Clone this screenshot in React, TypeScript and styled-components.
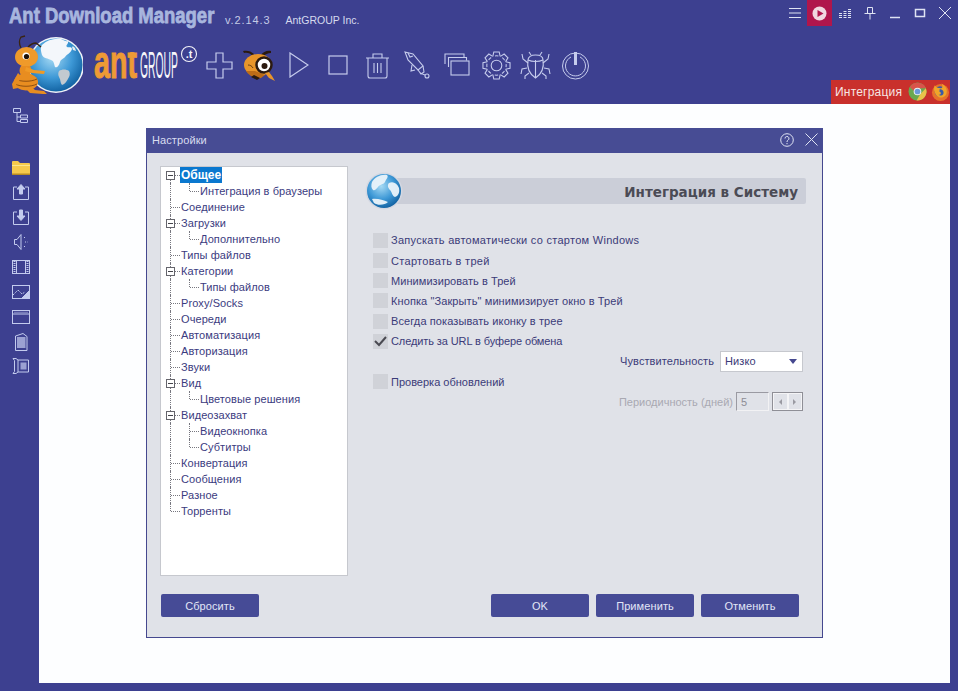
import React from "react";
import styled, { createGlobalStyle } from "styled-components";

const GlobalStyle = createGlobalStyle`
  html, body {
    margin: 0;
    padding: 0;
    background: #3d4090;
  }
  body {
    font-family: "Liberation Sans", Arial, sans-serif;
    font-size: 11px;
    overflow: hidden;
  }
`;

const Shell = styled.div`
  width: 958px;
  height: 691px;
  display: flex;
  flex-direction: column;
  background: #3d4090;
`;

const Header = styled.header`
  height: 104px;
  display: flex;
  flex-direction: column;
  flex-shrink: 0;
`;

const TitleRow = styled.div`
  height: 26px;
  display: flex;
  align-items: flex-start;
`;

const AppTitle = styled.div`
  width: 206px;
  margin: 3px 0 0 9px;
`;

const AppTitleText = styled.span`
  display: inline-block;
  transform: scaleX(0.84);
  transform-origin: left center;
  font-size: 22px;
  font-weight: 700;
  line-height: 26px;
  white-space: nowrap;
  color: #a8b6de;
  -webkit-text-stroke: 0.8px #a8b6de;
`;

const Version = styled.span`
  margin: 14px 0 0 10px;
  font-size: 11px;
  letter-spacing: 0.9px;
  line-height: 13px;
  color: #c5cbe6;
`;

const Company = styled.span`
  margin: 14px 0 0 15px;
  font-size: 10.5px;
  line-height: 13px;
  color: #d6daee;
`;

const WindowControls = styled.div`
  margin-left: auto;
  display: flex;
  align-items: center;
  height: 26px;
`;

const ControlButton = styled.button<{ $active?: boolean; $width?: number }>`
  width: ${(p) => p.$width ?? 25}px;
  height: 26px;
  padding: 0;
  border: 0;
  display: flex;
  align-items: center;
  justify-content: center;
  background: ${(p) => (p.$active ? "#b0164c" : "transparent")};
`;

const Toolbar = styled.div`
  flex: 1;
  display: flex;
  align-items: center;
  padding-left: 12px;
`;

const LogoMark = styled.div`
  width: 71px;
  height: 60px;
  flex-shrink: 0;
`;

const Brand = styled.div`
  width: 106px;
  height: 60px;
  margin-left: 11px;
  flex-shrink: 0;
`;

const ToolSlot = styled.button`
  width: 39.5px;
  height: 36px;
  padding: 0;
  border: 0;
  background: transparent;
  display: flex;
  align-items: center;
  justify-content: center;
  flex-shrink: 0;
`;

const IntegrationBadge = styled.div`
  margin-left: auto;
  margin-right: 8px;
  align-self: flex-end;
  width: 119px;
  height: 24px;
  box-sizing: border-box;
  padding-left: 4px;
  display: flex;
  align-items: center;
  background: #c9302c;
  color: #f6e6e4;
  font-size: 12px;
  letter-spacing: 0.2px;
`;

const BadgeIcons = styled.div`
  margin-left: auto;
  display: flex;
  gap: 4px;
`;

const Workspace = styled.div`
  flex: 1;
  display: flex;
  min-height: 0;
`;

const Sidebar = styled.nav`
  width: 39px;
  flex-shrink: 0;
  display: flex;
  flex-direction: column;
`;

const SideSlot = styled.div<{ $gap?: boolean }>`
  height: 24.9px;
  padding-left: 12px;
  margin-top: ${(p) => (p.$gap ? 26 : 0)}px;
  display: flex;
  align-items: center;
`;

const Content = styled.main`
  flex: 1;
  margin: 0 8px 8px 0;
  padding: 24px 0 0 107px;
  background: #fdfeff;
`;

const Dialog = styled.section`
  width: 677px;
  height: 510px;
  box-sizing: border-box;
  border: 1px solid #45488f;
  border-top: 0;
  background: #e0e2e8;
  display: flex;
  flex-direction: column;
`;

const DialogTitle = styled.div`
  height: 25px;
  flex-shrink: 0;
  display: flex;
  align-items: center;
  padding: 0 5px 2px 6px;
  box-sizing: border-box;
  margin: 0 -1px;
  background: #474c94;
  color: #d9ddf0;
  font-size: 11px;
  letter-spacing: 0.1px;
`;

const DialogActions = styled.div`
  margin-left: auto;
  display: flex;
  align-items: center;
  gap: 11px;
`;

const DialogBody = styled.div`
  flex: 1;
  display: flex;
  flex-direction: column;
  padding: 13px 16px 0 13px;
`;

const MainRow = styled.div`
  display: flex;
  height: 410px;
`;

const Tree = styled.div`
  width: 188px;
  box-sizing: border-box;
  border: 1px solid #c6c8ce;
  background: #fff;
  flex-shrink: 0;
`;

const TreeRow = styled.div`
  height: 16px;
  display: flex;
`;

const Guide = styled.span<{ $line: "full" | "half" | "down" | "none"; $branch?: boolean }>`
  position: relative;
  width: 19px;
  height: 16px;
  flex-shrink: 0;

  &::before {
    content: "";
    position: absolute;
    left: 9px;
    top: ${(p) => (p.$line === "down" ? 8 : 0)}px;
    bottom: ${(p) => (p.$line === "half" ? 8 : 0)}px;
    border-left: ${(p) => (p.$line === "none" ? "0" : "1px dotted #77777f")};
  }

  &::after {
    content: "";
    position: absolute;
    left: 10px;
    right: 0;
    top: 8px;
    border-top: ${(p) => (p.$branch ? "1px dotted #77777f" : "0")};
  }
`;

const ExpandBox = styled.i`
  position: absolute;
  z-index: 1;
  left: 5px;
  top: 4px;
  width: 7px;
  height: 7px;
  border: 1px solid #65656c;
  background: #fff;

  &::after {
    content: "";
    position: absolute;
    left: 1px;
    right: 1px;
    top: 3px;
    border-top: 1px solid #45454c;
  }
`;

const TreeLabel = styled.span<{ $selected?: boolean }>`
  height: 16px;
  padding: 0 1px;
  line-height: 16px;
  white-space: nowrap;
  letter-spacing: ${(p) => (p.$selected ? 0 : 0.08)}px;
  font-size: ${(p) => (p.$selected ? 12 : 11)}px;
  color: ${(p) => (p.$selected ? "#fff" : "#3b3b80")};
  background: ${(p) => (p.$selected ? "#0a78cf" : "transparent")};
  font-weight: ${(p) => (p.$selected ? 700 : 400)};
`;

const Panel = styled.div`
  flex: 1;
  margin-left: 17px;
  display: flex;
  flex-direction: column;
`;

const PanelHeader = styled.div`
  height: 38px;
  margin-top: 6px;
  display: flex;
  align-items: center;
`;

const PanelGlobe = styled.div`
  width: 38px;
  height: 38px;
  position: relative;
  z-index: 1;
  flex-shrink: 0;
`;

const PanelHeading = styled.h2`
  flex: 1;
  height: 26px;
  margin: 0 0 0 -17px;
  padding-right: 8px;
  border-radius: 2px;
  background: #cbced8;
  color: #4b4b55;
  text-align: right;
  font-family: "DejaVu Sans", sans-serif;
  font-size: 13.5px;
  font-weight: 700;
  line-height: 29px;
`;

const Form = styled.div`
  margin-top: 20.3px;
  padding: 0 3px 0 8px;
  display: flex;
  flex-direction: column;
`;

const CheckRow = styled.label<{ $tracking: number }>`
  height: 20.2px;
  display: flex;
  align-items: center;
  gap: 3px;
  letter-spacing: ${(p) => p.$tracking}px;
  color: #3b3b78;
`;

const CheckBox = styled.span`
  width: 15px;
  height: 15px;
  flex-shrink: 0;
  display: flex;
  align-items: center;
  justify-content: center;
  background: #d0d2d8;
`;

const OptionRow = styled.div<{ $disabled?: boolean }>`
  height: 20px;
  display: flex;
  align-items: center;
  justify-content: flex-end;
  letter-spacing: ${(p) => (p.$disabled ? 0 : 0.1)}px;
  color: ${(p) => (p.$disabled ? "#a9a9b2" : "#3b3b78")};
`;

const SelectBox = styled.div`
  width: 83px;
  height: 21px;
  box-sizing: border-box;
  margin-left: 6px;
  padding: 0 5px 0 4px;
  display: flex;
  align-items: center;
  justify-content: space-between;
  background: #fff;
  border: 1px solid #c6c8ce;
  color: #3b3b78;
`;

const SelectArrow = styled.span`
  width: 0;
  height: 0;
  border-left: 4.5px solid transparent;
  border-right: 4.5px solid transparent;
  border-top: 5px solid #45488f;
`;

const SpinInput = styled.div`
  width: 33px;
  height: 19px;
  box-sizing: border-box;
  margin-left: 3px;
  padding-left: 4px;
  display: flex;
  align-items: center;
  border: 1px solid #9a9aa2;
  border-right-color: #f2f2f4;
  border-bottom-color: #f2f2f4;
  color: #8c8c95;
`;

const SpinGroup = styled.div`
  margin-left: 3px;
  display: flex;
  border: 1px solid #8f8f96;
`;

const SpinButton = styled.span<{ $dir: "left" | "right" }>`
  width: 14.5px;
  height: 17px;
  box-sizing: border-box;
  display: flex;
  align-items: center;
  justify-content: center;
  border: 1px solid #f4f4f6;
  background: #e0e2e8;

  &::after {
    content: "";
    border-top: 3px solid transparent;
    border-bottom: 3px solid transparent;
    border-${(p) => (p.$dir === "left" ? "right" : "left")}: 3px solid #9a9aa2;
  }
`;

const Footer = styled.div`
  margin-top: 18px;
  padding: 0 7px 0 1px;
  display: flex;
`;

const FooterRight = styled.div`
  margin-left: auto;
  display: flex;
  gap: 7px;
`;

const ActionButton = styled.button`
  width: 98px;
  height: 23px;
  padding: 0;
  border: 0;
  border-radius: 2px;
  background: #464b96;
  color: #e2e6f6;
  font-family: "Liberation Sans", sans-serif;
  font-size: 11px;
  letter-spacing: 0.1px;
`;

const ICON = "#c6cced";

const GlobeDefs = ({ id }: { id: string }) => (
  <defs>
    <radialGradient id={id} cx="42%" cy="36%" r="70%">
      <stop offset="0%" stopColor="#a6daf4" />
      <stop offset="55%" stopColor="#3d98d6" />
      <stop offset="100%" stopColor="#0b5a9a" />
    </radialGradient>
  </defs>
);

const AntLogo = () => (
  <svg width="71" height="60" viewBox="0 0 71 60">
    <GlobeDefs id="logoGlobe" />
    <circle cx="44" cy="30" r="28" fill="#f0f3f8" />
    <circle cx="44" cy="30" r="26.500" fill="url(#logoGlobe)" />
    <path d="M30 10c5-5 12-7 19-6 3 1 5 3 7 2 1 3-3 4-1 6 2 1 4-1 5 2-1 4-5 5-7 8-2 2-4 2-5 5-1 4-3 6-5 5-1-3-1-6-4-7-3-2-7-1-9-5-1-4-2-7 0-10z" fill="#f4f7fb" />
    <path d="M47 36c3-2 7-2 10 0 1 2 1 4 0 6-2 4-4 7-7 8-2-2-1-5-3-8-1-2-1-4 0-6z" fill="#c2cad0" />
    <path d="M60 12c1-1 2 0 3 1l1 3-3-1z" fill="#e4eaf0" />
    <path d="M9 13C7 9 7 5 9 2l4-1M16 12c2-2 4-4 8-4l5 4" fill="none" stroke="#3a2412" strokeWidth="1.300" />
    <ellipse cx="14.500" cy="22" rx="11.500" ry="10" fill="#ef9a2a" />
    <circle cx="14" cy="21" r="3.600" fill="#fff" />
    <circle cx="14.500" cy="21.500" r="2.600" fill="#1c1008" />
    <path d="M9 31c-2 3-2 6 0 9l8 0c3-2 3-6 1-9z" fill="#e88d20" />
    <path d="M14 32l8 3 11 1-1 3-12-1-7-2z" fill="#f09a26" />
    <ellipse cx="14" cy="47" rx="12" ry="8.500" fill="#e88d20" />
    <path d="M3 44c6 3 16 3 22 0M3 49c6 3 16 3 22 0" stroke="#8f4f10" strokeWidth="1" fill="none" />
    <path d="M6 38L0 49l1 5 5-1-2-3 6-8zM14 54l4 4 13 1 4 0-3-3-9-1-3-3z" fill="#e88d20" />
  </svg>
);

const BrandLogo = () => (
  <svg width="106" height="60" viewBox="0 -10 106 60">
    <defs>
      <clipPath id="brandClip">
        <rect x="-1" y="7" width="46" height="30" />
      </clipPath>
    </defs>
    <g clipPath="url(#brandClip)">
      <text
        transform="translate(0 33) scale(0.61 1)"
        fill="#ee9a35"
        stroke="#ee9a35"
        strokeWidth="1"
        fontFamily="Liberation Sans"
        fontWeight="700"
        fontSize="47"
      >
        ant
      </text>
    </g>
    <text transform="translate(46 33) scale(0.288 1)" fill="#f6f6fa" fontFamily="Liberation Sans" fontSize="36">
      GROUP
    </text>
    <circle cx="95" cy="9" r="7.500" fill="none" stroke="#f2f2f8" strokeWidth="1.100" />
    <text x="95" y="13" textAnchor="middle" fill="#f6f6fa" fontFamily="Liberation Sans" fontWeight="700" fontSize="11">
      .t
    </text>
  </svg>
);

const PlusIcon = () => (
  <svg width="27" height="27" viewBox="0 0 27 27" fill="none" stroke={ICON} strokeWidth="1.200">
    <path d="M10 1h7v9h9v7h-9v9h-7v-9H1v-7h9z" />
  </svg>
);

const AntSearchIcon = () => (
  <svg width="36" height="34" viewBox="0 0 36 34">
    <path d="M12 8c-3-3-6-4-9-3l-1-2c4-1 8 0 11 3zM20 7c2-3 6-5 10-4l0 2c-3 0-6 1-8 4z" fill="#2b1a10" />
    <ellipse cx="17" cy="17" rx="14" ry="11" fill="#e8952a" />
    <path d="M5 23c3 5 9 8 15 7l4-3-10-4z" fill="#bd6c18" />
    <circle cx="23" cy="17" r="7.500" fill="#fff" stroke="#2b1a10" strokeWidth="2.500" />
    <circle cx="23.500" cy="18" r="3" fill="#2b1a10" />
    <path d="M24 25l4 5 6 3-3-5-3-4z" fill="#e8952a" />
    <path d="M10 29l6 3 3-2-6-3z" fill="#2b1a10" />
    <path d="M7 17c2 0 4 1 5 3" stroke="#6b3d10" fill="none" />
  </svg>
);

const PlayIcon = () => (
  <svg width="20" height="26" viewBox="0 0 20 26" fill="none" stroke={ICON} strokeWidth="1.200">
    <path d="M1 1l18 12L1 25z" />
  </svg>
);

const StopIcon = () => (
  <svg width="20" height="20" viewBox="0 0 20 20" fill="none" stroke={ICON} strokeWidth="1.200">
    <rect x="1" y="1" width="18" height="18" />
  </svg>
);

const TrashIcon = () => (
  <svg width="25" height="27" viewBox="0 0 25 27" fill="none" stroke={ICON} strokeWidth="1.100">
    <path d="M1 6h23M8 6V2h9v4M3 6v18a2 2 0 0 0 2 2h15a2 2 0 0 0 2-2V6" />
    <path d="M9 11v10M12.500 11v10M16 11v10" />
  </svg>
);

const RocketIcon = () => (
  <svg width="27" height="29" viewBox="0 0 27 29" fill="none" stroke={ICON} strokeWidth="1.100">
    <path d="M1 1l8 2 10 12-5 4L4 9z" />
    <path d="M4 2l2 4 3-1M19 15l1 6-3 2-3-4M8 14l-1 6 4-1" />
    <circle cx="23" cy="25" r="2" />
    <path d="M16 22l5 2" />
  </svg>
);

const WindowsIcon = () => (
  <svg width="26" height="24" viewBox="0 0 26 24" fill="none" stroke={ICON} strokeWidth="1.100">
    <path d="M1 11V1h19v3" />
    <path d="M4.500 14V4.500h18v3" />
    <rect x="7" y="8" width="18" height="14" />
  </svg>
);

const GearIcon = () => {
  const teeth = Array.from({ length: 8 }, (_, i) => i * 45);
  return (
    <svg width="29" height="29" viewBox="-15 -15 30 30" fill="none" stroke={ICON} strokeWidth="1.100">
      <circle r="5.500" />
      {teeth.map((deg) => (
        <path key={deg} transform={`rotate(${deg})`} d="M-3.800-9.500L-2.800-14H2.800L3.800-9.500" />
      ))}
      <circle r="10" strokeDasharray="3.600 4.250" strokeDashoffset="9.700" />
    </svg>
  );
};

const BugIcon = () => (
  <svg width="31" height="29" viewBox="0 0 31 29" fill="none" stroke={ICON} strokeWidth="1.100">
    <path d="M8 9c0-3 3-5 7.500-5S23 6 23 9c1 6 0 13-7.500 18C8 22 7 15 8 9z" />
    <path d="M15.500 9v18M8 9c4 2 11 2 15 0M11 4L9 1M20 4l2-3" />
    <path d="M8 12L3 8 2 3M23 12l5-4 1-5M7 17l-5 1-1 5M24 17l5 1 1 5M9 22l-4 3v3M22 22l4 3v3" />
  </svg>
);

const PowerIcon = () => (
  <svg width="27" height="29" viewBox="0 0 27 29" fill="none" stroke={ICON} strokeWidth="1">
    <circle cx="13.500" cy="15" r="13" />
    <path d="M9 6a10 10 0 1 0 9 0" />
    <rect x="12" y="1" width="3" height="13" fill="#c6cced" stroke="none" />
  </svg>
);

const ControlIcon = ({ children, w = 14, h = 14 }: { children: React.ReactNode; w?: number; h?: number }) => (
  <svg width={w} height={h} viewBox={`0 0 ${w} ${h}`} fill="none" stroke="#dfe3f3" strokeWidth="1">
    {children}
  </svg>
);

const SideIcon = ({ children }: { children: React.ReactNode }) => (
  <svg width="18" height="18" viewBox="0 0 18 18" fill="none" stroke="#c3cbee" strokeWidth="1">
    {children}
  </svg>
);

const ChromeIcon = () => (
  <svg width="19" height="19" viewBox="0 0 20 20">
    <circle cx="10" cy="10" r="9.500" fill="#6aa84f" />
    <path d="M2 5.500A9.500 9.500 0 0 1 18.800 6.500H10a3.500 3.500 0 0 0-3.500 3z" fill="#d9534a" />
    <path d="M18.800 6.500A9.500 9.500 0 0 1 9 19.500l4-7z" fill="#e8c24a" />
    <circle cx="10" cy="10" r="4" fill="#f2f2f2" />
    <circle cx="10" cy="10" r="3" fill="#6a9ad8" />
  </svg>
);

const FirefoxIcon = () => (
  <svg width="19" height="20" viewBox="0 0 20 20">
    <circle cx="10" cy="10.500" r="9" fill="#e8732a" />
    <circle cx="9.500" cy="9.500" r="5.500" fill="#3a5aa8" />
    <path d="M4 3c-1 3-1 5 0 7 1 5 7 8 11 4 2-2 2-6 1-8-1-2-3-4-5-5 2 3 1 5-1 5C7 6 5 5 4 3z" fill="#f0a52a" />
    <path d="M9 7c3 0 5 2 4 5-1 2-4 2-5 1 3 0 3-3 1-3z" fill="#3a5aa8" />
  </svg>
);

type TreeItem = {
  label: string;
  expand?: boolean;
  selected?: boolean;
  child?: "full" | "half";
  trunk?: "full" | "half" | "down";
};

const TREE: TreeItem[] = [
  { label: "Общее", expand: true, selected: true, trunk: "down" },
  { label: "Интеграция в браузеры", child: "half" },
  { label: "Соединение" },
  { label: "Загрузки", expand: true },
  { label: "Дополнительно", child: "half" },
  { label: "Типы файлов" },
  { label: "Категории", expand: true },
  { label: "Типы файлов", child: "half" },
  { label: "Proxy/Socks" },
  { label: "Очереди" },
  { label: "Автоматизация" },
  { label: "Авторизация" },
  { label: "Звуки" },
  { label: "Вид", expand: true },
  { label: "Цветовые решения", child: "half" },
  { label: "Видеозахват", expand: true },
  { label: "Видеокнопка", child: "full" },
  { label: "Субтитры", child: "half" },
  { label: "Конвертация" },
  { label: "Сообщения" },
  { label: "Разное" },
  { label: "Торренты", trunk: "half" },
];

const OPTIONS_TOP = [
  { label: "Запускать автоматически со стартом Windows", tracking: 0.28 },
  { label: "Стартовать в трей", tracking: 0.3 },
  { label: "Минимизировать в Трей", tracking: 0.06 },
  { label: 'Кнопка "Закрыть" минимизирует окно в Трей', tracking: 0.1 },
  { label: "Всегда показывать иконку в трее", tracking: 0.1 },
  { label: "Следить за URL в буфере обмена", tracking: -0.1, checked: true },
];

const Option = ({ label, checked, tracking }: { label: string; checked?: boolean; tracking: number }) => (
  <CheckRow $tracking={tracking}>
    <CheckBox>
      {checked && (
        <svg width="13" height="11" viewBox="0 0 13 11" fill="none" stroke="#4a4a52" strokeWidth="2">
          <path d="M1 5l4 4 7-8" />
        </svg>
      )}
    </CheckBox>
    {label}
  </CheckRow>
);

export default function App() {
  return (
    <>
      <GlobalStyle />
      <Shell>
        <Header>
          <TitleRow>
            <AppTitle>
              <AppTitleText>Ant Download Manager</AppTitleText>
            </AppTitle>
            <Version>v.2.14.3</Version>
            <Company>AntGROUP Inc.</Company>
            <WindowControls>
              <ControlButton>
                <ControlIcon>
                  <path d="M1 2.500h12M1 7h12M1 11.500h12" />
                </ControlIcon>
              </ControlButton>
              <ControlButton $active>
                <svg width="15" height="15" viewBox="0 0 15 15">
                  <circle cx="7.500" cy="7.500" r="7" fill="#f0d8e0" />
                  <path d="M5.500 4l6 3.500-6 3.500z" fill="#b0164c" />
                </svg>
              </ControlButton>
              <ControlButton>
                <ControlIcon>
                  <path d="M1 7.500h3M5.500 7.500h3M10 7.500h3M1 9.500h3M5.500 9.500h3M10 9.500h3M1 11.500h3M5.500 11.500h3M10 11.500h3M10 5.500h3M10 3.500h3M5.500 5.500h3" />
                </ControlIcon>
              </ControlButton>
              <ControlButton>
                <ControlIcon>
                  <path d="M4.500 1.500h5v6h-5zM1.500 7.500h11M7 7.500v6" />
                </ControlIcon>
              </ControlButton>
              <ControlButton>
                <ControlIcon>
                  <path d="M2 11.500h10" strokeWidth="1.500" />
                </ControlIcon>
              </ControlButton>
              <ControlButton>
                <ControlIcon>
                  <rect x="2.500" y="3.500" width="9" height="7" strokeWidth="1.500" />
                </ControlIcon>
              </ControlButton>
              <ControlButton $width={26}>
                <ControlIcon>
                  <path d="M1 1l12 12M13 1L1 13" />
                </ControlIcon>
              </ControlButton>
            </WindowControls>
          </TitleRow>
          <Toolbar>
            <LogoMark>
              <AntLogo />
            </LogoMark>
            <Brand>
              <BrandLogo />
            </Brand>
            <ToolSlot><PlusIcon /></ToolSlot>
            <ToolSlot><AntSearchIcon /></ToolSlot>
            <ToolSlot><PlayIcon /></ToolSlot>
            <ToolSlot><StopIcon /></ToolSlot>
            <ToolSlot><TrashIcon /></ToolSlot>
            <ToolSlot><RocketIcon /></ToolSlot>
            <ToolSlot><WindowsIcon /></ToolSlot>
            <ToolSlot><GearIcon /></ToolSlot>
            <ToolSlot><BugIcon /></ToolSlot>
            <ToolSlot><PowerIcon /></ToolSlot>
            <IntegrationBadge>
              Интеграция
              <BadgeIcons>
                <ChromeIcon />
                <FirefoxIcon />
              </BadgeIcons>
            </IntegrationBadge>
          </Toolbar>
        </Header>
        <Workspace>
          <Sidebar>
            <SideSlot>
              <SideIcon>
                <path d="M1.500 1.500h7v4h-7zM5 5.500v9h3M5 10h3M8.500 8h7v3h-7zM8.500 12.500h7v3h-7z" />
              </SideIcon>
            </SideSlot>
            <SideSlot $gap>
              <svg width="18" height="15" viewBox="0 0 18 15">
                <path d="M0 2a1 1 0 0 1 1-1h5l2 2h9a1 1 0 0 1 1 1v10a1 1 0 0 1-1 1H1a1 1 0 0 1-1-1z" fill="#f6c94c" />
                <path d="M0 5h18v1H0z" fill="#fbe58e" />
                <path d="M0 13.500h18V15H0z" fill="#b88a22" />
              </svg>
            </SideSlot>
            <SideSlot>
              <SideIcon>
                <path d="M5 4H1.500v12.500h15V4H13" />
                <path d="M9 1.500l4 4.500h-2.500v5h-3V6H5z" fill="#c3cbee" />
              </SideIcon>
            </SideSlot>
            <SideSlot>
              <SideIcon>
                <path d="M5 4H1.500v12.500h15V4H13" />
                <path d="M9 12.500l4-4.500h-2.500V2h-3v6H5z" fill="#c3cbee" />
              </SideIcon>
            </SideSlot>
            <SideSlot>
              <SideIcon>
                <path d="M2.500 6.500h2.500l4-5v15l-4-5H2.500z" />
                <path d="M12 4.500h2M13 9h2.500M12 13.500h2" strokeDasharray="1 1" />
              </SideIcon>
            </SideSlot>
            <SideSlot>
              <SideIcon>
                <rect x="0.500" y="2.500" width="17" height="13" />
                <path d="M4.500 2.500v13M13.500 2.500v13" />
                <path d="M2.500 3v12M15.500 3v12" strokeDasharray="1 1" strokeWidth="2" />
              </SideIcon>
            </SideSlot>
            <SideSlot>
              <SideIcon>
                <rect x="0.500" y="2.500" width="17" height="13" />
                <path d="M1 12l5-5 4 4 3-2" strokeDasharray="1.500 0.800" />
                <path d="M10 15l7-7v7z" fill="#c3cbee" />
              </SideIcon>
            </SideSlot>
            <SideSlot>
              <SideIcon>
                <rect x="0.500" y="2.500" width="17" height="13" />
                <path d="M0.500 6h17" />
                <path d="M2.500 4.300h13" strokeDasharray="1 1" />
              </SideIcon>
            </SideSlot>
            <SideSlot>
              <SideIcon>
                <path d="M3.500 3L11 .5 15 3.500V17.500H3.500z" />
                <rect x="5.500" y="4.500" width="7.500" height="10" fill="#c3cbee" opacity="0.7" />
              </SideIcon>
            </SideSlot>
            <SideSlot>
              <SideIcon>
                <path d="M1 1.500h3l2 1.500h10.500v12H6l-2 1.500H1l1.500-2v-11z" />
                <path d="M6 3v12" />
                <rect x="9" y="6" width="5" height="6" fill="#c3cbee" opacity="0.7" />
              </SideIcon>
            </SideSlot>
          </Sidebar>
          <Content>
            <Dialog>
              <DialogTitle>
                Настройки
                <DialogActions>
                  <svg width="14" height="14" viewBox="0 0 14 14" fill="none" stroke="#dfe3f3">
                    <circle cx="7" cy="7" r="6.300" />
                    <path d="M5 5.500a2 2 0 1 1 3 1.700c-.8.500-1 .9-1 1.800" />
                    <path d="M7 10v1.200" />
                  </svg>
                  <svg width="13" height="13" viewBox="0 0 13 13" fill="none" stroke="#dfe3f3">
                    <path d="M.5.500l12 12M12.500.500l-12 12" />
                  </svg>
                </DialogActions>
              </DialogTitle>
              <DialogBody>
                <MainRow>
                  <Tree>
                    {TREE.map((item, i) => (
                      <TreeRow key={i}>
                        <Guide $line={item.trunk ?? "full"} $branch={!item.child}>
                          {item.expand && <ExpandBox />}
                        </Guide>
                        {item.child && <Guide $line={item.child} $branch />}
                        <TreeLabel $selected={item.selected}>{item.label}</TreeLabel>
                      </TreeRow>
                    ))}
                  </Tree>
                  <Panel>
                    <PanelHeader>
                      <PanelGlobe>
                        <svg width="38" height="38" viewBox="0 0 38 38">
                          <GlobeDefs id="panelGlobe" />
                          <circle cx="19" cy="19" r="18.500" fill="#d4d8e2" />
                          <circle cx="19" cy="19" r="17" fill="url(#panelGlobe)" />
                          <path d="M7 10c3-5 9-8 15-7 2 2-1 4-2 7-2 3-5 2-7 5-2 2-3 4-5 3-2-2-2-5-1-8zM24 11c4-2 8 0 10 5 1 5-1 8-4 9-3-1-3-5-5-7-2-2-3-5-1-7zM7 27c5-1 11 1 16 3-3 3-10 4-14 1z" fill="#eaf3fa" opacity="0.95" />
                        </svg>
                      </PanelGlobe>
                      <PanelHeading>Интеграция в Систему</PanelHeading>
                    </PanelHeader>
                    <Form>
                      {OPTIONS_TOP.map((o) => (
                        <Option key={o.label} label={o.label} checked={o.checked} tracking={o.tracking} />
                      ))}
                      <OptionRow>
                        Чувствительность
                        <SelectBox>
                          Низко
                          <SelectArrow />
                        </SelectBox>
                      </OptionRow>
                      <Option label="Проверка обновлений" tracking={0} />
                      <OptionRow $disabled>
                        Периодичность (дней)
                        <SpinInput>5</SpinInput>
                        <SpinGroup>
                          <SpinButton $dir="left" />
                          <SpinButton $dir="right" />
                        </SpinGroup>
                      </OptionRow>
                    </Form>
                  </Panel>
                </MainRow>
                <Footer>
                  <ActionButton>Сбросить</ActionButton>
                  <FooterRight>
                    <ActionButton>OK</ActionButton>
                    <ActionButton>Применить</ActionButton>
                    <ActionButton>Отменить</ActionButton>
                  </FooterRight>
                </Footer>
              </DialogBody>
            </Dialog>
          </Content>
        </Workspace>
      </Shell>
    </>
  );
}
